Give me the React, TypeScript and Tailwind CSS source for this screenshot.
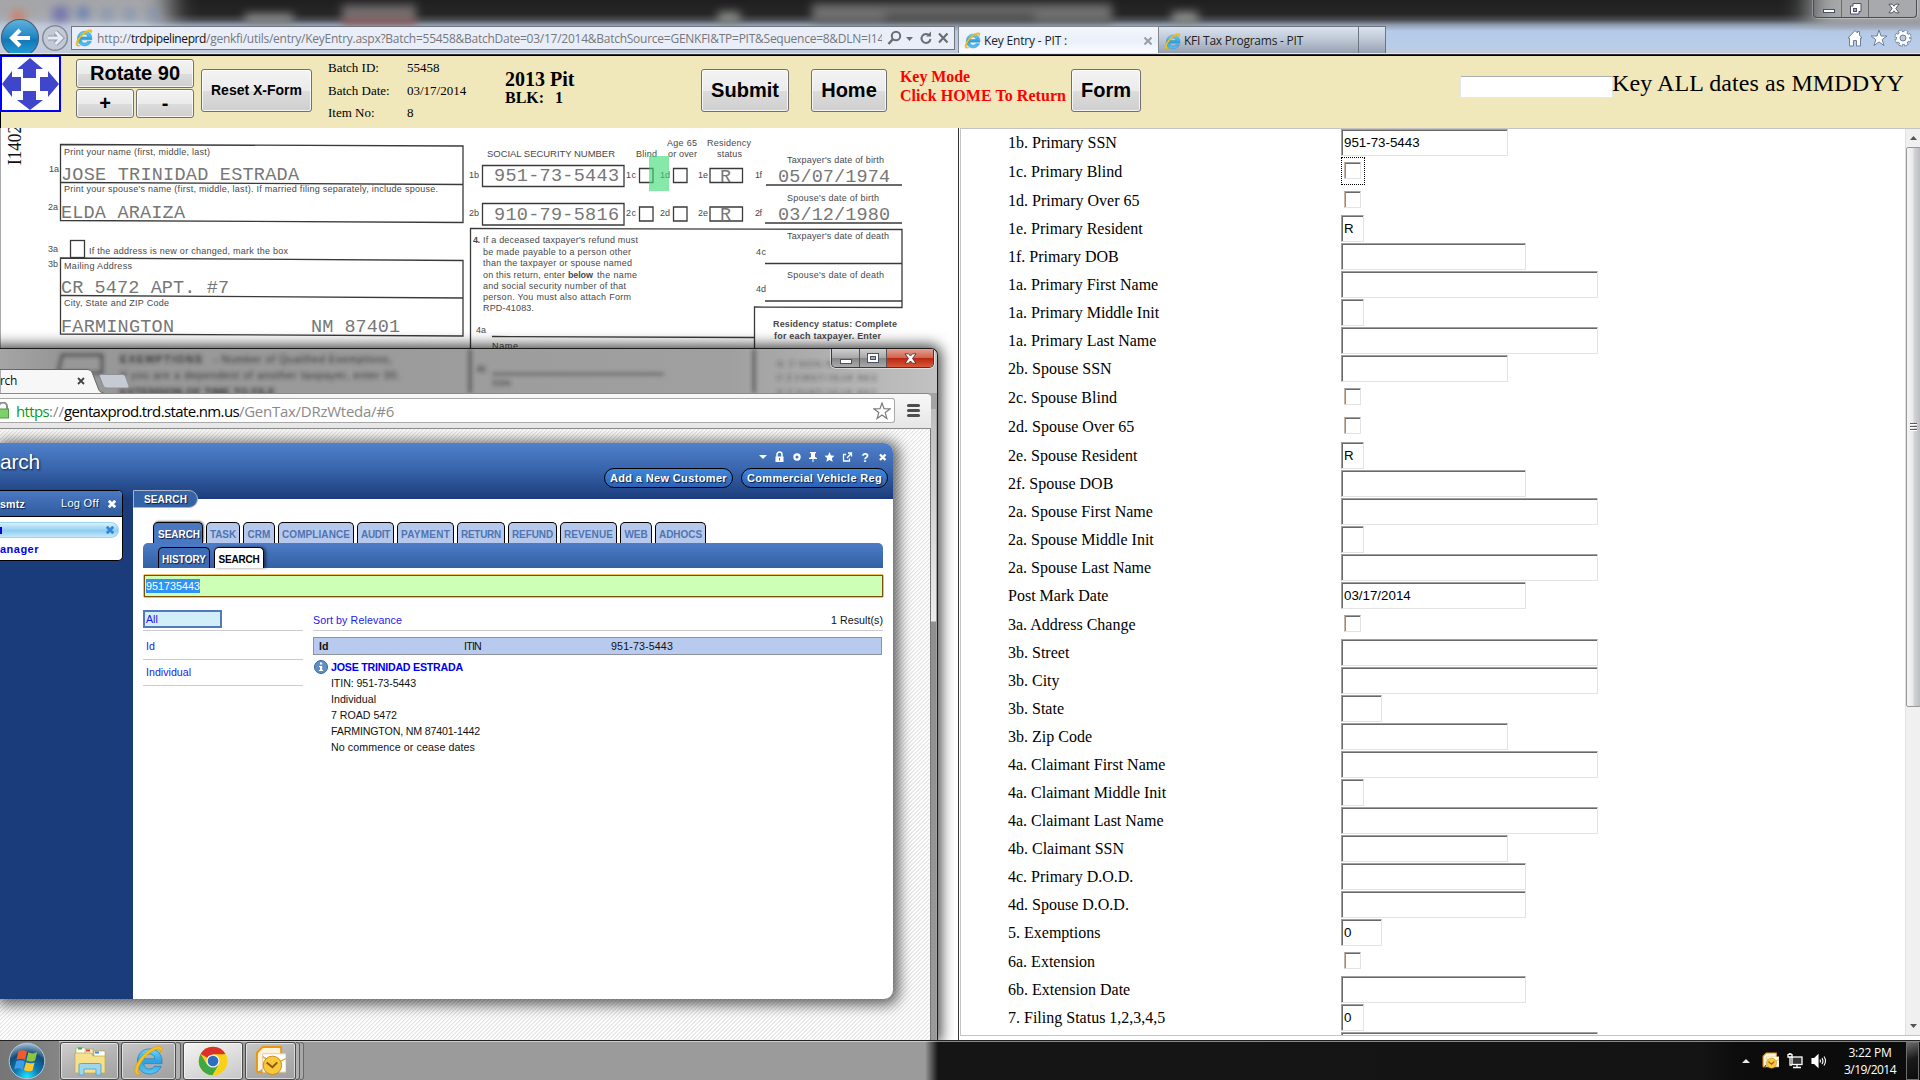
import { useLayoutEffect, useRef } from "react";

/** Single line of text spread or tightened to an exact width. */
function Fit({ w, children, className = "" }: { w: number; children: string; className?: string }) {
  const ref = useRef<HTMLSpanElement>(null);
  useLayoutEffect(() => {
    const el = ref.current;
    if (!el) return;
    el.style.letterSpacing = "0px";
    const natural = el.getBoundingClientRect().width;
    el.style.letterSpacing = `${(w - natural) / children.length}px`;
  }, [w, children]);
  return (
    <span ref={ref} className={`inline-block shrink-0 whitespace-pre ${className}`}>
      {children}
    </span>
  );
}

function IeLogo({ size = 18, id }: { size?: number; id: string }) {
  return (
    <svg width={size} height={size} viewBox="0 0 32 32" className="shrink-0">
      <defs>
        <linearGradient id={id} x1="0" y1="0" x2="0" y2="1">
          <stop offset="0" stopColor="#6fd3f7" />
          <stop offset="0.5" stopColor="#2ea3e0" />
          <stop offset="1" stopColor="#5cc6f2" />
        </linearGradient>
      </defs>
      <path
        d="M17 4C9.5 4 4.5 9.500 4.500 17S10 30 17 30c5.500 0 10-3 12-8h-7c-1 1.800-2.800 2.800-5 2.800-3.300 0-5.600-2-5.800-5.600H30C30.600 10 25.500 4 17 4zM11.400 14.200c.5-3 2.600-5 5.600-5s5.200 2 5.500 5z"
        fill={`url(#${id})`}
        stroke="#1f83c4"
        strokeWidth="0.8"
      />
      <path
        d="M30 2.500C27-.5 19 2.500 12 9 4.500 16 0 25.500 2.500 29.500c1.200 1.700 4 1.200 7-.3-2.500.5-4 .2-4.300-1.500C4.500 24 8 17 14 11c6-5.500 11.500-7.500 13.500-6.500 1 .6.8 2.200.2 4C29.500 6 31 4 30 2.500z"
        fill="#f7c31d"
        stroke="#d9980a"
        strokeWidth="0.6"
      />
    </svg>
  );
}

function BrowserTop() {
  return (
    <header className="relative h-[56px] w-full shrink-0 overflow-hidden bg-[linear-gradient(180deg,#1f1f1f_0px,#262626_14px,#4a4d52_20px,#8f9cae_25px,#b4cae8_31px,#b9cde9_47px,#c3cbd8_52px)]">
      <svg width="1920" height="56" className="absolute inset-0">
        <defs>
          <filter id="soft" x="-20%" y="-60%" width="140%" height="220%">
            <feGaussianBlur stdDeviation="5" />
          </filter>
          <filter id="wide" x="-20%" y="-60%" width="140%" height="220%">
            <feGaussianBlur stdDeviation="14 5" />
          </filter>
        </defs>
        <rect x="-40" y="-10" width="210" height="34" fill="#a5a6a9" filter="url(#wide)" />
        <rect x="-20" y="20" width="180" height="36" fill="#c3ccda" filter="url(#wide)" />
        <g filter="url(#soft)">
          <circle cx="18" cy="17" r="7" fill="#cf7b63" />
          <rect x="53" y="7" width="15" height="14" fill="#6f6fb0" />
          <circle cx="83" cy="13" r="6" fill="#5b78b8" />
          <circle cx="107" cy="14" r="6" fill="#8596b5" />
          <circle cx="130" cy="14" r="6" fill="#8596b5" />
          <circle cx="154" cy="14" r="6" fill="#8596b5" />
          <rect x="245" y="14" width="48" height="10" fill="#8d8d8d" />
          <rect x="342" y="5" width="74" height="17" fill="#736d6e" />
          <rect x="342" y="22" width="74" height="3" fill="#bb4c50" />
          <rect x="718" y="12" width="22" height="12" fill="#888d88" />
          <rect x="812" y="4" width="300" height="19" fill="#707070" />
          <rect x="885" y="14" width="150" height="5" fill="#303030" />
          <rect x="1172" y="12" width="26" height="12" fill="#8d918c" />
        </g>
        <rect x="1810" y="-10" width="170" height="36" fill="#a7a9ab" filter="url(#wide)" />
      </svg>

      <div className="absolute right-[3px] top-0 flex h-[18px] w-[104px] rounded-b-[4px] border border-t-0 border-[#4c4d50] shadow-[0_0_0_1px_rgba(255,255,255,0.25)]">
        <div className="flex w-[28px] items-center justify-center border-r border-[#6b6c6f] pl-[2px]">
          <span className="mt-[4px] h-[4px] w-[12px] border border-[#4a5068] bg-white" />
        </div>
        <div className="flex w-[27px] items-center justify-center border-r border-[#6b6c6f]">
          <svg width="13" height="12" viewBox="0 0 13 12">
            <path d="M4 .5h8v8h-2v2.500H1.500V3H4z" fill="#fff" stroke="#4a5068" />
            <rect x="4.500" y="5.500" width="3" height="3" fill="#aaa" stroke="#4a5068" />
          </svg>
        </div>
        <div className="flex flex-1 items-center justify-center pl-[2px]">
          <svg width="12" height="11" viewBox="0 0 13 11">
            <path d="M1 .8h3.500L6.500 3l2-2.200H12L8.500 5.500 12 10.200H8.500L6.500 8l-2 2.200H1l3.500-4.700z" fill="#fff" stroke="#4a5068" />
          </svg>
        </div>
      </div>

      <div className="relative flex h-full items-start pt-[26px]">
        <svg width="72" height="40" viewBox="0 0 72 40" className="-mt-[7px] shrink-0">
          <defs>
            <linearGradient id="back" x1="0" y1="0" x2="0" y2="1">
              <stop offset="0" stopColor="#5fb3dd" />
              <stop offset="0.5" stopColor="#1f83c1" />
              <stop offset="0.55" stopColor="#1278b8" />
              <stop offset="1" stopColor="#25a5dc" />
            </linearGradient>
          </defs>
          <circle cx="20" cy="19" r="18.500" fill="url(#back)" stroke="#49617e" strokeWidth="1.200" />
          <path d="M20 11l-8 8 8 8M12.500 19H30" fill="none" stroke="#fff" strokeWidth="4" />
          <circle cx="55" cy="19" r="12.300" fill="#c3cad6" stroke="#838c9a" strokeWidth="1.500" />
          <path d="M55.500 13l6 6-6 6M61 19H48" fill="none" stroke="#8f99a8" strokeWidth="5" />
          <path d="M55.500 13l6 6-6 6M61 19H48" fill="none" stroke="#e9edf3" strokeWidth="3" />
        </svg>
        <div className="-ml-px flex h-[24px] w-[884px] items-center border border-[#71767f] bg-[#e9eef8] pl-[3px] font-['Open_Sans',sans-serif] text-[12px] text-[#75787c]">
          <IeLogo size={18} id="ieA" />
          <div className="ml-[4px] flex w-[785px] items-center overflow-hidden pt-px leading-[20px]">
            <Fit w={34}>http://</Fit>
            <Fit w={75} className="text-[#111]">trdpipelineprd</Fit>
            <Fit w={678}>/genkfi/utils/entry/KeyEntry.aspx?Batch=55458&BatchDate=03/17/2014&BatchSource=GENKFI&TP=PIT&Sequence=8&DLN=I14</Fit>
          </div>
          <svg width="64" height="18" viewBox="0 0 64 18" fill="none" stroke="#6a6e74" strokeWidth="2" className="ml-[4px] shrink-0">
            <circle cx="10" cy="7" r="4.200" />
            <path d="M7 10l-4.500 5" strokeWidth="2.500" />
            <path d="M20 8h7l-3.500 4z" fill="#6a6e74" stroke="none" />
            <path d="M43.500 6.500A4.500 4.500 0 1 0 44.500 10" />
            <path d="M45 2.500v5h-5z" fill="#6a6e74" stroke="none" />
            <path d="M53 4.500l8.500 9M61.500 4.500l-8.500 9" strokeWidth="2.200" />
          </svg>
        </div>
        <div className="ml-[3px] flex h-[28px] w-[201px] items-center border border-b-0 border-[#82868f] bg-[linear-gradient(180deg,#f4f7fc,#eaf0fa_50%,#fbfcff)] pl-[5px] font-['Open_Sans',sans-serif] text-[12px] text-[#222]">
          <IeLogo size={17} id="ieB" />
          <Fit w={83} className="ml-[3px]">Key Entry - PIT :</Fit>
          <svg width="8" height="8" viewBox="0 0 8 8" stroke="#9a9da2" strokeWidth="2" className="ml-[77px] shrink-0">
            <path d="M.5.5l7 7M7.500.5l-7 7" />
          </svg>
        </div>
        <div className="flex h-[27px] w-[200px] items-center border border-l-0 border-b-0 border-[#6f7580] bg-[linear-gradient(180deg,#dbe4f0,#bcc6d4_50%,#98a1b0)] pl-[5px] pt-[2px] font-['Open_Sans',sans-serif] text-[12px] text-[#222]">
          <IeLogo size={17} id="ieC" />
          <Fit w={119} className="ml-[3px]">KFI Tax Programs - PIT</Fit>
        </div>
        <div className="h-[27px] w-[27px] border border-l-0 border-b-0 border-[#6f7580] bg-[linear-gradient(180deg,#dbe4f0,#bcc6d4_50%,#98a1b0)]" />
        <svg width="66" height="22" viewBox="0 0 66 22" fill="#fff" stroke="#6d7f9c" strokeWidth="1" className="ml-[460px] mt-[1px] shrink-0">
          <path d="M2 11l7-7.500 2.500 2.500V4.500h2V8l2.500 3h-1.500v8h-4v-5.500h-3V19h-4v-8z" />
          <path d="M33 3l2 6h6l-4.800 3.600 1.800 6-5-3.700-5 3.700 1.800-6L25 9h6z" />
          <circle cx="57" cy="11" r="6.300" stroke="#6d7f9c" strokeWidth="4.500" strokeDasharray="3.600 1.348" fill="none" />
          <circle cx="57" cy="11" r="6" stroke="#6d7f9c" strokeWidth="1.500" fill="none" />
          <circle cx="57" cy="11" r="4.600" stroke="#fff" strokeWidth="3" fill="none" />
          <circle cx="57" cy="11" r="6.300" stroke="#fff" strokeWidth="3" strokeDasharray="2.400 2.548" strokeDashoffset="-0.600" fill="none" />
          <circle cx="57" cy="11" r="3" fill="#b6cbe8" />
        </svg>
      </div>
      <div className="absolute bottom-0 left-0 h-[3px] w-full bg-[linear-gradient(180deg,#e4e6ea_0px,#e4e6ea_1px,#5c5c62_1px,#000_2px)]" />
    </header>
  );
}

const grayButton =
  "flex items-center justify-center rounded-[3px] border border-[#707070] bg-[linear-gradient(180deg,#f3f3f3_0%,#ebebeb_50%,#dcdcdc_51%,#cfcfcf_100%)] font-bold text-black shadow-[inset_0_0_0_1px_rgba(255,255,255,0.75)]";

function KeyToolbar() {
  return (
    <section className="flex h-[72px] w-full shrink-0 items-start bg-[#f0e7ba] font-['Liberation_Sans',Arial,sans-serif]">
      <div className="h-[72px] w-[61px] border-l border-black">
        <svg width="61" height="57" viewBox="0 0 61 57" className="-ml-px -mt-px">
          <rect x="1" y="1" width="59" height="55" fill="#fff" stroke="#00f" strokeWidth="2" />
          <g fill="#4046cc">
            <path d="M30 3L43 14H36V23H23V14H17z" />
            <path d="M30 55L43 45H36V36H23V45H17z" />
            <path d="M2 29L12 16V22H21V36H12V42z" />
            <path d="M59 29L48 16V22H40V36H48V42z" />
          </g>
        </svg>
      </div>
      <div className="ml-[15px] mt-[3px] grid w-[118px] grid-cols-2 gap-x-[2px] gap-y-px text-[20px]">
        <button className={`${grayButton} col-span-2 h-[29px] pb-[2px]`}><Fit w={90}>Rotate 90</Fit></button>
        <button className={`${grayButton} h-[29px] pb-[2px]`}>+</button>
        <button className={`${grayButton} h-[29px] pb-px`}>-</button>
      </div>
      <button className={`${grayButton} ml-[7px] mt-[13px] h-[43px] w-[111px] text-[14px]`}><Fit w={91}>Reset X-Form</Fit></button>
      <div className="ml-[16px] mt-px grid w-[177px] grid-cols-[79px_1fr] font-['Liberation_Serif',serif] text-[13px] leading-[22.500px]">
        <span>Batch ID:</span><span>55458</span>
        <span>Batch Date:</span><span>03/17/2014</span>
        <span>Item No:</span><span>8</span>
      </div>
      <div className="mt-[13px] w-[196px] font-['Liberation_Serif',serif] font-bold">
        <div className="text-[20px] leading-[20px]">2013 Pit</div>
        <div className="flex text-[16px] leading-[17px]"><span className="w-[50px]">BLK:</span><span>1</span></div>
      </div>
      <button className={`${grayButton} mt-[13px] h-[43px] w-[88px] pb-[2px] text-[20px]`}>Submit</button>
      <button className={`${grayButton} ml-[22px] mt-[13px] h-[43px] w-[76px] pb-[2px] text-[20px]`}>Home</button>
      <div className="ml-[13px] mt-[11px] w-[171px] whitespace-nowrap font-['Liberation_Serif',serif] text-[16px] font-bold leading-[19px] text-[#f00]">
        <Fit w={70}>Key Mode</Fit>
        <br />
        <Fit w={166}>Click HOME To Return</Fit>
      </div>
      <button className={`${grayButton} mt-[13px] h-[43px] w-[70px] pb-[2px] text-[20px]`}>Form</button>
      <div className="ml-[319px] mt-[20px] h-[22px] w-[153px] rounded-[2px] border border-[#e3e9ef] border-t-[#abadb3] bg-white" />
      <div className="-ml-px mt-[13px] font-['Liberation_Serif',serif] text-[24px] leading-[28px]"><Fit w={292}>Key ALL dates as MMDDYY</Fit></div>
    </section>
  );
}

type Line = [string, number, number, number, number?, string?];

const scanSmall: Line[] = [
  ["Print your name (first, middle, last)", 64, 155, 146],
  ["Print your spouse's name (first, middle, last). If married filing separately, include spouse.", 64, 192, 374],
  ["If the address is new or changed, mark the box", 89, 254, 199],
  ["Mailing Address", 64, 268.5, 68],
  ["City, State and ZIP Code", 64, 306, 105],
  ["1a", 49, 172, 10],
  ["2a", 48, 210, 10],
  ["3a", 48, 252, 10],
  ["3b", 48, 267, 10],
  ["SOCIAL SECURITY NUMBER", 487, 157, 128, 9.5],
  ["Blind", 636, 157, 21],
  ["Age 65", 667, 146, 30],
  ["or over", 668, 157, 29],
  ["Residency", 707, 146, 44],
  ["status", 717, 157, 25],
  ["1b", 469, 178, 10],
  ["2b", 469, 216, 10],
  ["1c", 626, 178, 10],
  ["2c", 626, 216, 10],
  ["1d", 660, 178, 10],
  ["2d", 660, 216, 10],
  ["1e", 698, 178, 10],
  ["2e", 698, 216, 10],
  ["1f", 755, 178, 7],
  ["2f", 755, 216, 7],
  ["Taxpayer's date of birth", 787, 162.5, 97],
  ["Spouse's date of birth", 787, 201, 92],
  ["Taxpayer's date of death", 787, 239, 102],
  ["Spouse's date of death", 787, 277.5, 97],
  ["4c", 756, 255, 10],
  ["4d", 756, 292, 10],
  ["4a", 476, 333, 10],
  ["Name", 492, 349, 26],
  ["If a deceased taxpayer's refund must", 483, 243, 155],
  ["be made payable to a person other", 483, 255, 148],
  ["than the taxpayer or spouse named", 483, 266, 149],
  ["on this return, enter", 483, 277.5, 82],
  ["the name", 597, 277.5, 40],
  ["and social security number of that", 483, 288.5, 143],
  ["person. You must also attach Form", 483, 299.5, 148],
  ["RPD-41083.", 483, 311, 51],
];

const scanBold: Line[] = [
  ["4.", 473, 243, 7],
  ["below", 568, 277.5, 25],
  ["Residency status: Complete", 773, 327, 124],
  ["for each taxpayer. Enter", 774, 339, 107],
];

const scanMono: Line[] = [
  ["JOSE TRINIDAD ESTRADA", 61, 180, 238],
  ["ELDA ARAIZA", 61, 218, 124],
  ["CR 5472 APT. #7", 61, 293, 168],
  ["FARMINGTON", 61, 332, 113],
  ["NM 87401", 311, 332, 89],
  ["951-73-5443", 494, 181, 125],
  ["910-79-5816", 494, 219.500, 125],
  ["05/07/1974", 778, 182, 112],
  ["03/12/1980", 778, 220, 112],
  ["R", 720, 182, 12],
  ["R", 720, 220, 12],
];

function ScannedForm() {
  return (
    <svg width="958" height="912" viewBox="0 128 958 912" className="shrink-0 bg-white">
      <rect x="0" y="128" width="1" height="912" fill="#aaa" />
      <text transform="translate(20.500 165) rotate(-90)" fontFamily="Liberation Serif" fontSize="18" textLength="40" lengthAdjust="spacingAndGlyphs" fill="#111">I1402</text>
      <g fill="none" stroke="#3a3a3a" strokeWidth="1.300">
        <path d="M60.500 144.500L463 146V222.500L60.500 220.500z" />
        <path d="M60.500 182.500L463 184.500" />
        <path d="M60.500 258L463 260.500V336L60.500 334z" />
        <path d="M60.500 295.500L463 298" />
        <rect x="70.500" y="240.500" width="14" height="17" />
        <path d="M482.500 165.500H624V186.500H482.500z" />
        <path d="M482.500 203.500H624V225H482.500z" />
        <path d="M639.500 168.500h13.500v14h-13.500zM673.500 168.500h13.500v14h-13.500zM710 168.500h32.500v14H710z" />
        <path d="M639.500 207h13.500v14h-13.500zM673.500 207h13.500v14h-13.500zM710 207h32.500v14H710z" />
        <path d="M766 185H902M765 223H902" />
        <path d="M470.500 1000V228.500L902 229.500V307.500L754.500 307V1000" />
        <path d="M765 263.500H902M765 301H902M492 336.500L754 337.500" />
      </g>
      <g fontFamily="Liberation Sans" fontSize="9" fill="#484848">
        {scanSmall.map(([t, x, y, w, size]) => (
          <text key={t + y} x={x} y={y} textLength={w} fontSize={size ?? 9}>{t}</text>
        ))}
        <g fontWeight="700">
          {scanBold.map(([t, x, y, w]) => (
            <text key={t} x={x} y={y} textLength={w}>{t}</text>
          ))}
        </g>
      </g>
      <g fontFamily="Liberation Mono" fontSize="18.500" fill="#777">
        {scanMono.map(([t, x, y, w]) => (
          <text key={t + y} x={x} y={y} textLength={w}>{t}</text>
        ))}
      </g>
      <rect x="649" y="156" width="20" height="35" fill="#3ddc74" fillOpacity="0.62" />
    </svg>
  );
}

type Row = { label: string; kind: "ssn" | "check" | "one" | "two" | "date" | "name"; value?: string; focus?: boolean };

const rows: Row[] = [
  { label: "1b. Primary SSN", kind: "ssn", value: "951-73-5443" },
  { label: "1c. Primary Blind", kind: "check", focus: true },
  { label: "1d. Primary Over 65", kind: "check" },
  { label: "1e. Primary Resident", kind: "one", value: "R" },
  { label: "1f. Primary DOB", kind: "date" },
  { label: "1a. Primary First Name", kind: "name" },
  { label: "1a. Primary Middle Init", kind: "one" },
  { label: "1a. Primary Last Name", kind: "name" },
  { label: "2b. Spouse SSN", kind: "ssn" },
  { label: "2c. Spouse Blind", kind: "check" },
  { label: "2d. Spouse Over 65", kind: "check" },
  { label: "2e. Spouse Resident", kind: "one", value: "R" },
  { label: "2f. Spouse DOB", kind: "date" },
  { label: "2a. Spouse First Name", kind: "name" },
  { label: "2a. Spouse Middle Init", kind: "one" },
  { label: "2a. Spouse Last Name", kind: "name" },
  { label: "Post Mark Date", kind: "date", value: "03/17/2014" },
  { label: "3a. Address Change", kind: "check" },
  { label: "3b. Street", kind: "name" },
  { label: "3b. City", kind: "name" },
  { label: "3b. State", kind: "two" },
  { label: "3b. Zip Code", kind: "ssn" },
  { label: "4a. Claimant First Name", kind: "name" },
  { label: "4a. Claimant Middle Init", kind: "one" },
  { label: "4a. Claimant Last Name", kind: "name" },
  { label: "4b. Claimant SSN", kind: "ssn" },
  { label: "4c. Primary D.O.D.", kind: "date" },
  { label: "4d. Spouse D.O.D.", kind: "date" },
  { label: "5. Exemptions", kind: "two", value: "0" },
  { label: "6a. Extension", kind: "check" },
  { label: "6b. Extension Date", kind: "date" },
  { label: "7. Filing Status 1,2,3,4,5", kind: "one", value: "0" },
  { label: "", kind: "name" },
];

const fieldWidth = {
  ssn: "w-[167px]",
  one: "w-[23px]",
  two: "w-[41px]",
  date: "w-[185px]",
  name: "w-[257px]",
};

function EntryPanel() {
  return (
    <section className="flex h-[908px] w-[960px] shrink-0 border border-r-0 border-[#c4c4c4] bg-white">
      <div className="h-[906px] flex-1 overflow-hidden pl-[47px]">
        {rows.map((r, i) => (
          <div
            key={i}
            className={`flex ${r.kind !== "check" ? "h-[28px]" : r.label.startsWith("2d") ? "h-[30px]" : "h-[29px]"}`}
          >
            <div className={`w-[333px] font-['Liberation_Serif',serif] text-[16px] text-black ${r.kind === "check" ? "leading-[30px]" : "leading-[28px]"}`}>{r.label}</div>
            {r.kind === "check" ? (
              <div className={`flex h-[28px] w-[24px] pl-[2px] pt-[4px] ${r.focus ? "border border-dotted border-black" : "border border-transparent"}`}>
                <div className="h-[17px] w-[17px] border border-[#e3e3e3] border-l-[#c8b4a4] border-t-[#a0a0a0] bg-white">
                  <div className="h-full w-full border-l border-t border-l-[#7f93a8] border-t-[#696969]" />
                </div>
              </div>
            ) : (
              <div className={`h-[27px] border border-[#e3e3e3] border-l-[#a0a0a0] border-t-[#a0a0a0] ${fieldWidth[r.kind]}`}>
                <div className="h-full w-full border-l border-t border-[#696969] pl-px font-['Liberation_Sans',Arial,sans-serif] text-[13.333px] leading-[24px] text-black">
                  {r.value}
                </div>
              </div>
            )}
          </div>
        ))}
      </div>
      <div className="flex w-[15px] flex-col items-center border-l border-[#e2e2e2] bg-[#f0f0f0]">
        <div className="flex h-[18px] items-center justify-center">
          <svg width="7" height="4" viewBox="0 0 7 4"><path d="M0 4L3.500 0 7 4z" fill="#555" /></svg>
        </div>
        <div className="flex h-[560px] w-[15px] flex-col items-center justify-center gap-px rounded-[2px] border border-[#979797] bg-[linear-gradient(90deg,#f5f5f5,#e9e9ea_45%,#d2d3d6_55%,#bcbdc1)]">
          <span className="h-[2px] w-[7px] border-t border-[#5a5a5a] bg-white" />
          <span className="h-[2px] w-[7px] border-t border-[#5a5a5a] bg-white" />
          <span className="h-[2px] w-[7px] border-t border-[#5a5a5a] bg-white" />
        </div>
        <div className="flex flex-1 items-end pb-[7px]">
          <svg width="7" height="4" viewBox="0 0 7 4"><path d="M0 0L3.500 4 7 0z" fill="#555" /></svg>
        </div>
      </div>
    </section>
  );
}

const moduleTabs: [string, string, number][] = [
  ["TASK", "w-[34px]", 26],
  ["CRM", "w-[32px]", 23],
  ["COMPLIANCE", "w-[76px]", 68],
  ["AUDIT", "w-[37px]", 29],
  ["PAYMENT", "w-[57px]", 49],
  ["RETURN", "w-[48px]", 40],
  ["REFUND", "w-[49px]", 41],
  ["REVENUE", "w-[57px]", 49],
  ["WEB", "w-[32px]", 23],
  ["ADHOCS", "w-[51px]", 43],
];

function CrossIcon({ className }: { className: string }) {
  return (
    <svg width="8" height="8" viewBox="0 0 8 8" strokeWidth="2.800" className={`shrink-0 ${className}`}>
      <path d="M.8.8l6.400 6.400M7.200.8L.8 7.200" />
    </svg>
  );
}

function GenTax() {
  return (
    <div className="h-[556px] w-[893px] overflow-hidden rounded-r-[9px] bg-white font-['Liberation_Sans',Arial,sans-serif] text-[10.667px] text-[#111] shadow-[2px_2px_14px_4px_rgba(0,0,0,0.6)]">
      <div className="flex h-[56px] items-start justify-between bg-[linear-gradient(180deg,#4f80cb,#3966ad_45%,#1b3c7b)]">
        <div className="mt-[6px] text-[21px] leading-[26px] text-white [text-shadow:1px_1px_2px_#0a1d42]"><Fit w={40}>arch</Fit></div>
        <div className="pr-[5px] pt-[8px]">
          <svg width="136" height="12" viewBox="0 0 136 12" fill="#fff" className="ml-[148px]">
            <path d="M7 4h8l-4 4z" />
            <path d="M23.500 5.500h8V11h-8z" />
            <path d="M25 6V3.500a2.500 2.500 0 0 1 5 0V6" fill="none" stroke="#fff" strokeWidth="1.500" />
            <rect x="27" y="7" width="1" height="2.500" fill="#3c6bb4" />
            <circle cx="45" cy="6" r="2.600" fill="none" stroke="#fff" strokeWidth="2.200" />
            <path d="M58 1h6v1l-1 .5V6l2 1v1h-3.500v3h-1V8H57V7l2-1V2.500L58 2z" />
            <path d="M77.500 1l1.500 3.400 3.500.3-2.600 2.500.8 3.600-3.200-1.900-3.200 1.900.8-3.600-2.600-2.500 3.500-.3z" />
            <path d="M94 3.500h-2.500v6.500h6V7.500M95 7l4-4.200M96 2h3.500v3.500" fill="none" stroke="#fff" strokeWidth="1.300" />
            <path d="M128 3.500l5.500 5.500M133.500 3.500L128 9" fill="none" stroke="#fff" strokeWidth="2.300" />
            <text x="109.500" y="11" fontSize="12" fontWeight="700">?</text>
          </svg>
          <div className="mt-[5px] flex gap-[8px] text-[11px] font-bold leading-[18px] text-white [text-shadow:1px_1px_1px_#0a1d42]">
            <div className="h-[20px] w-[129px] rounded-full border border-black bg-[linear-gradient(180deg,#3f86dc,#2c62b4)] text-center"><Fit w={117}>Add a New Customer</Fit></div>
            <div className="h-[20px] w-[147px] rounded-full border border-black bg-[linear-gradient(180deg,#3f86dc,#2c62b4)] text-center"><Fit w={135}>Commercial Vehicle Reg</Fit></div>
          </div>
        </div>
      </div>

      <div className="flex h-[500px]">
        <aside className="w-[133px] bg-[#1b3c7a]">
          <div className="relative -mt-[9px] h-[71px] w-[123px] overflow-hidden rounded-r-[5px] border border-l-0 border-black bg-white">
            <div className="flex h-[26px] items-center border-b border-black bg-[linear-gradient(180deg,#4a78c2,#2f5b9f)] text-white [text-shadow:1px_1px_1px_#0a1d42]">
              <Fit w={25} className="font-bold">smtz</Fit>
              <Fit w={38} className="ml-[36px] text-[11px]">Log Off</Fit>
              <CrossIcon className="ml-[9px] stroke-white" />
            </div>
            <div className="mt-[5px] flex h-[16px] w-[119px] items-center rounded-r-full border border-l-0 border-[#9ed4f0] bg-[linear-gradient(180deg,#d9f1fc,#8ecdf0_55%,#c5e8fa)]">
              <span className="h-[7px] w-[2px] bg-[#0000e0]" />
              <CrossIcon className="ml-[104px] stroke-[#3386d8]" />
            </div>
            <div className="mt-[3px] text-[11px] font-bold leading-[17px] text-[#00e]"><Fit w={39}>anager</Fit></div>
          </div>
        </aside>

        <main className="w-[760px] pr-[10px]">
          <div className="relative -mt-[9px] flex h-[18px] w-[65px] items-center justify-center rounded-r-full border border-[#a9b3c6] bg-[#3463a8] text-[10px] font-bold text-white [text-shadow:1px_1px_1px_#0a1d42]">
            <Fit w={43}>SEARCH</Fit>
          </div>
          <div className="ml-[10px]">
            <div className="mt-[14px] flex h-[21px] gap-[3px] pl-[10px] text-[10px] font-bold leading-[24px]">
              <div className="h-[21px] w-[50px] rounded-t-[5px] border border-b-0 border-black bg-[#4a77c1] pl-[4px] text-white [text-shadow:1px_1px_1px_#0a1d42] shadow-[1px_-1px_2px_rgba(0,0,0,0.5)]"><Fit w={42}>SEARCH</Fit></div>
              {moduleTabs.map(([t, w, fit]) => (
                <div key={t} className={`h-[21px] rounded-t-[5px] border border-b-0 border-black bg-[#b6c9ec] text-center text-[#5074b0] ${w}`}>
                  <Fit w={fit}>{t}</Fit>
                </div>
              ))}
            </div>
            <div className="flex h-[25px] w-[740px] items-end gap-[4px] rounded-t-[5px] bg-[linear-gradient(180deg,#4d7bc6,#3261a5)] pl-[15px] text-[10px] font-bold leading-[24px]">
              <div className="h-[21px] w-[52px] rounded-t-[5px] border border-b-0 border-black bg-[#3d6cb4] text-center text-white [text-shadow:1px_1px_1px_#0a1d42]"><Fit w={44}>HISTORY</Fit></div>
              <div className="h-[21px] w-[50px] rounded-t-[5px] border border-b-0 border-black bg-white text-center text-black shadow-[2px_0_3px_rgba(0,0,0,0.5)]"><Fit w={41}>SEARCH</Fit></div>
            </div>
            <div className="mt-[6px] flex h-[24px] w-[741px] items-center rounded-[2px] border border-[#f0bd62] bg-[#cdffb7]">
              <div className="flex h-full w-full items-center border border-[#7a4f08] pl-px">
                <span className="h-[14px] bg-[#2f93f5] leading-[14px] text-white"><Fit w={54}>951735443</Fit></span>
              </div>
            </div>
            <div className="mt-[12px] flex">
              <nav className="w-[160px] text-[#2418f0]">
                <div className="h-[21px] border-b border-[#ccc]">
                  <div className="h-[18px] w-[79px] border-2 border-[#5379bd] bg-[#d1eef9] pl-[1px] leading-[14px]">All</div>
                </div>
                <div className="h-[29px] border-b border-[#ccc] pl-[3px] leading-[30px]">Id</div>
                <div className="h-[26px] border-b border-[#ccc] pl-[3px] leading-[25px]">Individual</div>
              </nav>
              <div className="ml-[10px] w-[570px]">
                <div className="flex h-[21px] justify-between border-b border-[#ccc] leading-[20px]">
                  <Fit w={89} className="text-[#2418f0]">Sort by Relevance</Fit>
                  <Fit w={52}>1 Result(s)</Fit>
                </div>
                <div className="mt-[6px] grid h-[18px] w-[569px] grid-cols-[145px_147px_1fr] border border-[#8f93a0] bg-[#b8caed] pl-[5px] leading-[17px]">
                  <b>Id</b>
                  <span><Fit w={17}>ITIN</Fit></span>
                  <span><Fit w={62}>951-73-5443</Fit></span>
                </div>
                <div className="mt-[4px] flex">
                  <svg width="14" height="16" viewBox="0 0 14 16" className="ml-[1px] shrink-0">
                    <circle cx="7" cy="8" r="6.500" fill="#5f8fc4" stroke="#3b6795" />
                    <path d="M6 3.500h2.200v2H6zM5 7h3.200v4H9v1H5v-1h1V8H5z" fill="#fff" />
                  </svg>
                  <div className="ml-[3px] flex flex-col leading-[16px]">
                    <span className="font-bold text-[#00e]"><Fit w={132}>JOSE TRINIDAD ESTRADA</Fit></span>
                    <span><Fit w={85}>ITIN: 951-73-5443</Fit></span>
                    <span><Fit w={45}>Individual</Fit></span>
                    <span><Fit w={66}>7 ROAD 5472</Fit></span>
                    <span><Fit w={149}>FARMINGTON, NM 87401-1442</Fit></span>
                    <span><Fit w={144}>No commence or cease dates</Fit></span>
                  </div>
                </div>
              </div>
            </div>
          </div>
        </main>
      </div>
    </div>
  );
}

function ChromeWindow() {
  return (
    <div className="absolute left-[-8px] top-[348px] flex h-[692px] w-[946px] flex-col overflow-hidden rounded-tr-[7px] border border-b-0 border-[#1c1c1c] bg-[#a3a3a3] pl-[7px] shadow-[0_0_14px_3px_rgba(0,0,0,0.75)]">
      <div className="relative h-[44px] shrink-0 overflow-hidden">
        <svg width="938" height="44" viewBox="0 349 938 44" className="absolute inset-0">
          <defs>
            <filter id="glass" x="-5%" y="-20%" width="110%" height="140%">
              <feGaussianBlur stdDeviation="2.200" />
            </filter>
            <linearGradient id="frame" x1="0" x2="1" y1="0" y2="0">
              <stop offset="0" stopColor="#a5a5a5" />
              <stop offset="0.06" stopColor="#979797" />
              <stop offset="0.78" stopColor="#a0a0a0" />
              <stop offset="1" stopColor="#c2c2c2" />
            </linearGradient>
          </defs>
          <rect x="0" y="349" width="938" height="44" fill="url(#frame)" />
          <g filter="url(#glass)" fill="#333" fontFamily="Liberation Sans" fontSize="10.500">
            <text x="120" y="363" fontWeight="700" textLength="82">EXEMPTIONS</text>
            <text x="214" y="363" textLength="178">- Number of Qualified Exemptions,</text>
            <text x="120" y="379" textLength="280">If you are a dependent of another taxpayer, enter 00.</text>
            <text x="120" y="396" textLength="155" fontWeight="700">EXTENSION OF TIME TO FILE</text>
            <path d="M470 349V393M754 349V393M62 355h40v18H58z" fill="none" stroke="#333" strokeWidth="2" />
            <path d="M492 374H664" stroke="#555" strokeWidth="2" />
            <text x="476" y="372" fontSize="9">4b</text>
            <text x="492" y="386" fontSize="9">SSN</text>
            <g fontSize="9" opacity="0.7">
              <text x="777" y="367" textLength="70">N if NON-RES</text>
              <text x="777" y="381" textLength="100">F if FIRST-YEAR RES</text>
              <text x="777" y="396" textLength="100">P if PART-YEAR RES</text>
            </g>
          </g>
        </svg>
        <div className="absolute right-[3px] top-0 flex h-[19px] w-[103px] overflow-hidden rounded-b-[5px] border border-t-0 border-[#3a3a3a] shadow-[0_0_0_1px_rgba(255,255,255,0.5)]">
          <div className="flex w-[28px] items-center justify-center border-r border-[#555] bg-[linear-gradient(180deg,#cfcfcf,#a9a9a9_48%,#858585_50%,#aaa)]">
            <span className="mt-[6px] h-[5px] w-[12px] border border-[#4a5068] bg-white" />
          </div>
          <div className="flex w-[27px] items-center justify-center border-r border-[#555] bg-[linear-gradient(180deg,#cfcfcf,#a9a9a9_48%,#858585_50%,#aaa)]">
            <span className="flex h-[10px] w-[12px] items-center justify-center border border-[#4a5068] bg-white">
              <span className="h-[4px] w-[6px] border border-[#4a5068] bg-[#aaa]" />
            </span>
          </div>
          <div className="flex flex-1 items-center justify-center bg-[linear-gradient(180deg,#e4a193,#cf6550_48%,#b8260f_50%,#d9573a)]">
            <svg width="13" height="11" viewBox="0 0 13 11">
              <path d="M1 .8h3.500L6.500 3l2-2.200H12L8.500 5.500 12 10.200H8.500L6.500 8l-2 2.200H1l3.500-4.700z" fill="#fff" stroke="#503038" strokeWidth="0.900" />
            </svg>
          </div>
        </div>
        <svg width="140" height="24" viewBox="0 0 140 24" className="absolute bottom-0 left-0">
          <path d="M0 .5H87c3 0 4.500 1.500 5.500 4L98.500 20c1 2.500 2 3.500 4.500 3.500V25H0z" fill="#f7f7f7" stroke="#666" strokeWidth="1" />
          <path d="M101 5.500h21c2 0 3 .7 3.700 2.500l3 8.500c.6 1.600 0 2.500-1.700 2.500h-19.500c-2.500 0-3.600-.8-4.500-3l-3.200-8c-.6-1.500-.3-2.500 1.200-2.500z" fill="#c5cad3" stroke="#858a92" strokeWidth="0.800" />
          <path d="M78 9l6 6M84 9l-6 6" stroke="#444" strokeWidth="1.800" />
        </svg>
        <div className="absolute bottom-[4px] left-0 font-['Open_Sans',sans-serif] text-[12px] leading-[17px] text-[#111]"><Fit w={17}>rch</Fit></div>
      </div>

      <div className="flex h-[36px] w-[931px] shrink-0 items-center rounded-tr-[4px] border-t border-b border-[#8a8a8a] bg-[linear-gradient(180deg,#f8f8f8,#e6e6e6)] pb-px">
        <div className="flex h-[25px] w-[895px] items-center rounded-r-[3px] border border-l-0 border-[#a8a8a8] bg-white font-['Open_Sans',sans-serif] text-[15px] leading-[22px] text-[#8a8a8a]">
          <svg width="10" height="17" viewBox="0 0 10 17" className="shrink-0">
            <path d="M-1 8V4.500a4 4 0 0 1 8 0V8" fill="none" stroke="#8c8c8c" strokeWidth="2" />
            <rect x="-4" y="7" width="12.500" height="9" fill="#7ed06a" stroke="#4f9a3e" />
          </svg>
          <Fit w={33} className="ml-[6px] text-[#0a9a1a]">https</Fit>
          <Fit w={15}>://</Fit>
          <Fit w={175} className="text-black">gentaxprod.trd.state.nm.us</Fit>
          <Fit w={155}>/GenTax/DRzWteda/#6</Fit>
          <svg width="18" height="18" viewBox="0 0 18 18" fill="#fff" stroke="#7b7b7b" strokeWidth="1.200" className="ml-auto mr-[3px]">
            <path d="M9 1l2 5.700 6 .2-4.800 3.700 1.700 5.900L9 13l-4.900 3.500 1.700-5.900L1 6.900l6-.2z" />
          </svg>
        </div>
        <div className="ml-[12px] flex flex-col gap-[2px]">
          <span className="h-[3px] w-[13px] rounded-full bg-[#4d4d4d]" />
          <span className="h-[3px] w-[13px] rounded-full bg-[#4d4d4d]" />
          <span className="h-[3px] w-[13px] rounded-full bg-[#4d4d4d]" />
        </div>
      </div>

      <div className="h-[611px] w-[931px] shrink-0 overflow-hidden border-r border-[#777] bg-[repeating-linear-gradient(135deg,#fff_0px,#fff_1.200px,#e4e4e4_1.700px,#e4e4e4_2.100px,#fff_2.830px)] pt-[14px]">
        <GenTax />
      </div>
      <div className="absolute bottom-0 right-[1px] top-[60px] w-[5px] bg-[linear-gradient(180deg,#bdbdbd,#ededed_210px,#ededed_212px,#8f8f8f_213px,#9a9a9a)]" />
    </div>
  );
}

const taskButton =
  "flex h-[38px] items-center justify-center rounded-[3px] border border-[#4a4a4a] shadow-[inset_0_0_0_1px_rgba(255,255,255,0.55)]";

function OutlookIcon({ size }: { size: number }) {
  return (
    <svg width={size} height={size} viewBox="0 0 32 32">
      <path d="M2 28V8L8 2h19v9" fill="#fdf3dc" stroke="#e8960f" strokeWidth="2" />
      <path d="M2 28h6" stroke="#e8960f" strokeWidth="2" />
      <path d="M8 9h24v19H8z" fill="#fff" stroke="#e0c9a0" />
      <path d="M8 12l12 8 12-6" fill="none" stroke="#f0a526" strokeWidth="1.500" />
      <circle cx="18" cy="21" r="9.500" fill="#f9c83d" stroke="#c98a12" />
      <path d="M12 18l6 5 5-5" fill="none" stroke="#8d5a08" strokeWidth="2" />
    </svg>
  );
}

function Taskbar() {
  return (
    <footer className="absolute bottom-0 left-0 flex h-[40px] w-full items-center border-t border-[#222] bg-[linear-gradient(90deg,#9b9b9b_0px,#9b9b9b_925px,#151515_938px,#141414_1700px,#0c0c0c_1740px)] shadow-[inset_0_1px_0_rgba(255,255,255,0.5)]">
      <div className="flex h-full w-[59px] items-center bg-[linear-gradient(90deg,#757575,#858585)] pl-[8px]">
        <svg width="38" height="38" viewBox="0 0 38 38">
          <defs>
            <radialGradient id="orb" cx="0.5" cy="0.95" r="0.95">
              <stop offset="0" stopColor="#23e4ff" />
              <stop offset="0.35" stopColor="#0c7db8" />
              <stop offset="0.7" stopColor="#134a78" />
              <stop offset="1" stopColor="#a8c4d8" />
            </radialGradient>
          </defs>
          <circle cx="19" cy="19" r="17.800" fill="url(#orb)" stroke="#b5c6d2" strokeWidth="1" />
          <path d="M10.500 9.500c3-1.800 5.500-1.500 8.500.2l-2 8.300c-3-1.500-5.500-1.600-8.500-.2z" fill="#ef5b2b" />
          <path d="M20.300 10.300c3 1.500 5.500 1.600 9-.2l-2.300 8.300c-3 1.500-5.500 1.600-8.600.2z" fill="#8cc63f" />
          <path d="M8.200 19.300c3-1.500 5.500-1.200 8.500.3l-2 7.800c-3-1.500-5.500-1.700-8.500-.2z" fill="#3d9be8" />
          <path d="M18 20.200c3 1.500 5.500 1.500 8.600.2l-2 8c-3 1.300-5.600 1.200-8.700-.3z" fill="#fdc52e" />
        </svg>
      </div>
      <div className={`${taskButton} ml-px w-[59px] bg-[linear-gradient(160deg,#d0d0d0,#b4b4b4_50%,#a2a2a2)]`}>
        <svg width="34" height="30" viewBox="0 0 34 30">
          <path d="M3 2h9l2 3v3H3z" fill="#fff" stroke="#b79b42" strokeWidth="0.600" />
          <path d="M5 1.500h4v2H5z" fill="#2fae3f" />
          <path d="M12 3h8v5h-8z" fill="#f6eec8" stroke="#b79b42" strokeWidth="0.600" />
          <path d="M13 3.500h4v2h-4z" fill="#cf4a35" />
          <path d="M21 5h11v6H21z" fill="#fff" stroke="#b79b42" strokeWidth="0.600" />
          <path d="M22 5.500h4v2h-4z" fill="#3a8fdc" />
          <path d="M2 7h16l2 3h12v17H2z" fill="#f5e08e" stroke="#c5a548" strokeWidth="0.700" />
          <path d="M6 29V19q0-1.500 1.500-1.500h19q1.500 0 1.500 1.500v10h-5v-6H11v6z" fill="#9fd6ee" stroke="#5aa9cf" />
        </svg>
      </div>
      <div className={`${taskButton} ml-[2px] w-[55px] bg-[linear-gradient(160deg,#c8c8c8,#b0b0b0_50%,#a0a0a0)]`}>
        <IeLogo size={31} id="ieT" />
      </div>
      <div className="h-[38px] w-[5px] rounded-r-[3px] border border-l-0 border-[#5a5a5a] bg-[#b0b0b0]" />
      <div className={`${taskButton} ml-[2px] w-[60px] bg-[linear-gradient(160deg,#f4f4f4,#dedede_50%,#c6c6c6)]`}>
        <svg width="30" height="30" viewBox="0 0 30 30">
          <circle cx="15" cy="15" r="14.300" fill="#fbd116" />
          <path d="M15 15L2.600 7.900A14.300 14.300 0 0 1 27.400 7.900z" fill="#db3127" />
          <path d="M2.600 7.900A14.300 14.300 0 0 0 14.500 29.300L21 18.500H9z" fill="#3fa845" />
          <path d="M15 8.200H27.600A14.300 14.300 0 0 1 14.500 29.300L21 18.500z" fill="#fbd116" />
          <circle cx="15" cy="15" r="6.600" fill="#eef2f6" />
          <circle cx="15" cy="15" r="5.300" fill="#2d6fbe" />
        </svg>
      </div>
      <div className={`${taskButton} ml-[2px] w-[51px] bg-[linear-gradient(160deg,#c8c8c8,#b0b0b0_50%,#a0a0a0)]`}>
        <OutlookIcon size={31} />
      </div>
      <div className="h-[38px] w-[4px] rounded-r-[3px] border border-l-0 border-[#5a5a5a] bg-[#b0b0b0]" />
      <div className="h-[38px] w-[4px] rounded-r-[3px] border border-l-0 border-[#6a6a6a] bg-[#a8a8a8]" />
      <div className="ml-auto flex h-full items-center">
        <svg width="8" height="4" viewBox="0 0 8 4" className="mr-[12px]"><path d="M0 4L4 0l4 4z" fill="#e8ecf2" /></svg>
        <OutlookIcon size={17} />
        <svg width="16" height="16" viewBox="0 0 16 16" fill="none" stroke="#fff" strokeWidth="1.300" className="ml-[8px]">
          <rect x="5" y="4" width="10" height="7.500" fill="#333" />
          <path d="M10 11.500v2.500M6 14.500h8M1 1v3h4V1M3 4v8h2M2.300 0v2M3.800 0v2" />
        </svg>
        <svg width="17" height="16" viewBox="0 0 17 16" fill="none" stroke="#fff" strokeWidth="1.100" className="ml-[8px]">
          <path d="M1 5.500h2.500L7 2v12l-3.500-3.500H1z" fill="#fff" />
          <path d="M9 6.500q1 1.500 0 3M11 5q2 3 0 6M13 3.500q3 4.500 0 9" />
        </svg>
        <div className="ml-[15px] flex w-[54px] flex-col items-center font-['Open_Sans',sans-serif] text-[12px] leading-[17px] text-white">
          <Fit w={43}>3:22 PM</Fit>
          <Fit w={52}>3/19/2014</Fit>
        </div>
        <div className="ml-[9px] mr-px h-[38px] w-[13px] border border-[#6e6e6e] bg-[linear-gradient(160deg,#6a6a6a,#1a1a1a_45%,#0c0c0c)]" />
      </div>
    </footer>
  );
}

export default function App() {
  return (
    <div className="relative flex h-[1080px] w-[1920px] flex-col overflow-hidden bg-white">
      <BrowserTop />
      <KeyToolbar />
      <div className="flex h-[912px]">
        <ScannedForm />
        <div className="h-[912px] w-[2px] bg-[linear-gradient(90deg,#333_1px,#fff_1px)]" />
        <EntryPanel />
      </div>
      <ChromeWindow />
      <Taskbar />
    </div>
  );
}
